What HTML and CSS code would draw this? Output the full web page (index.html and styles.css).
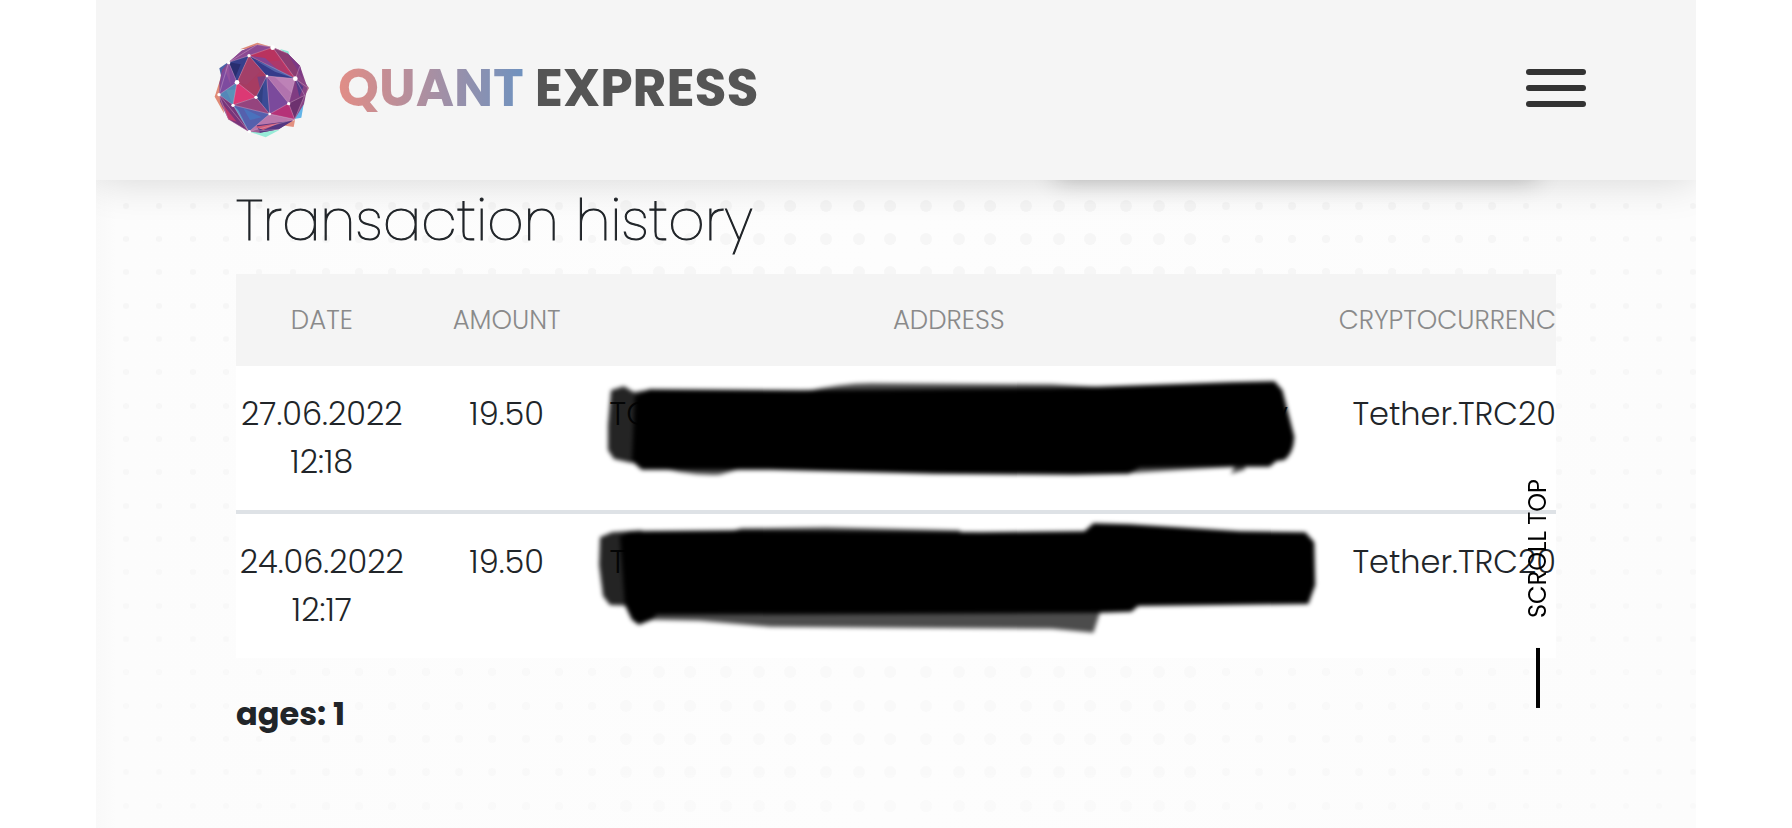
FILE: index.html
```
<!DOCTYPE html>
<html lang="en">
<head>
    <meta charset="UTF-8">
    <meta name="viewport" content="width=device-width, initial-scale=1.0">
    <title>Quant Express - Transaction history</title>
    <link rel="stylesheet" href="styles.css">
</head>
<body>
    <div class="page">
        <header class="header">
            <a class="logo" href="#">
                <svg class="logo-ball" viewBox="0 -6 390 360" aria-hidden="true">
                    <!-- outer coloured tips -->
                    <path d="M120 58L172 38L218 52Z" fill="#dc8878"/>
                    <path d="M240 57L265 64L272 84Z" fill="#8ee8d8"/>
                    <path d="M60 150L44 200L72 250Z" fill="#e08a76"/>
                    <path d="M306 145L327 174L312 202Z" fill="#b07090"/>
                    <path d="M314 205L304 263L278 268Z" fill="#62b4e8"/>
                    <path d="M240 285L281 291L285 270Z" fill="#e39080"/>
                    <path d="M148 305L197 322L238 300Z" fill="#97ecd8"/>
                    <path d="M58 115L84 97L66 150Z" fill="#4a62a8"/>
                    <!-- body -->
                    <path d="M86 97L125 62L172 44L218 52L262 70L300 108L322 172L312 222L284 268L236 298L180 308L147 305L85 268L60 215L58 160L66 120Z" fill="#8a4586"/>
                    <path d="M86 97L125 62L172 44L218 52L147 77Z" fill="#8c4a93"/>
                    <path d="M147 77L218 52L240 92L180 95Z" fill="#c4314f"/>
                    <path d="M147 77L218 52L286 146Z" fill="#b63563" fill-opacity=".8"/>
                    <path d="M147 77L195 84L232 118Z" fill="#854493"/>
                    <path d="M218 52L262 70L300 108L286 146Z" fill="#8b3d72"/>
                    <path d="M218 52L286 146L262 122Z" fill="#c43562"/>
                    <path d="M262 70L300 108L310 150Z" fill="#7c3a86"/>
                    <path d="M147 77L286 146L200 138Z" fill="#343b8b"/>
                    <path d="M165 90L225 125L286 146L220 112Z" fill="#5361aa"/>
                    <path d="M86 97L147 77L111 157Z" fill="#363f8c"/>
                    <path d="M86 97L122 103L105 145Z" fill="#292e70"/>
                    <path d="M147 77L200 138L168 202L111 157Z" fill="#a73c62"/>
                    <path d="M147 77L180 125L140 165L111 157Z" fill="#a33f68"/>
                    <path d="M172 140L200 138L180 178Z" fill="#7b3f80"/>
                    <path d="M86 97L111 157L57 194L66 130Z" fill="#7e4b9f"/>
                    <path d="M75 120L86 97L92 165Z" fill="#92529d"/>
                    <path d="M111 157L99 225L57 194Z" fill="#5587b8"/>
                    <path d="M78 180L108 178L99 225Z" fill="#5a93b8"/>
                    <path d="M111 157L168 202L99 225Z" fill="#dc3974"/>
                    <path d="M200 138L209 252L168 202Z" fill="#3b4b96"/>
                    <path d="M168 202L190 160L186 222Z" fill="#314082"/>
                    <path d="M200 138L266 220L209 252Z" fill="#7b4a9c"/>
                    <path d="M200 138L286 146L266 220Z" fill="#b173ae"/>
                    <path d="M225 142L286 146L275 190Z" fill="#bd82b7"/>
                    <path d="M286 146L314 196L266 220Z" fill="#803c82"/>
                    <path d="M286 146L310 170L298 200Z" fill="#523b88"/>
                    <path d="M266 220L314 196L284 268Z" fill="#6d316f"/>
                    <path d="M209 252L266 220L284 268Z" fill="#b53278"/>
                    <path d="M99 225L168 202L209 252Z" fill="#95447e"/>
                    <path d="M99 225L209 252L147 305Z" fill="#5560ad"/>
                    <path d="M130 235L185 262L150 270Z" fill="#4a72bd"/>
                    <path d="M57 194L99 225L147 305L85 268Z" fill="#77357a"/>
                    <path d="M70 225L110 275L85 268Z" fill="#bb3a6e"/>
                    <path d="M99 225L116 242L147 305Z" fill="#5e9cc9"/>
                    <path d="M209 252L284 268L147 305Z" fill="#ba78ac"/>
                    <path d="M170 286L278 272L236 298L180 308Z" fill="#543681"/>
                    <path d="M165 290L240 278L190 300Z" fill="#cf5b78"/>
                    <g fill="none" stroke="#e6c4d6" stroke-opacity=".7" stroke-width="1.5">
                        <path d="M86 97L172 44L218 52L147 77Z"/>
                        <path d="M86 97L111 157L147 77L286 146L218 52L262 70"/>
                        <path d="M86 97L57 194L111 157L99 225L57 194L147 305L99 225L168 202L111 157"/>
                        <path d="M147 77L200 138L286 146L266 220L200 138L168 202L209 252L200 138"/>
                        <path d="M99 225L209 252L266 220L314 196L286 146L322 172"/>
                        <path d="M147 305L209 252L284 268L266 220M147 305L284 268L314 196"/>
                        <path d="M300 108L286 146M57 194L85 268L147 305L236 298"/>
                    </g>
                    <g fill="#fff">
                        <circle cx="218" cy="53" r="7"/>
                        <circle cx="286" cy="146" r="7"/>
                        <circle cx="111" cy="157" r="7"/>
                        <circle cx="147" cy="77" r="5"/>
                        <circle cx="86" cy="98" r="5"/>
                        <circle cx="57" cy="194" r="5"/>
                        <circle cx="99" cy="226" r="5"/>
                        <circle cx="168" cy="202" r="5"/>
                        <circle cx="266" cy="221" r="5"/>
                        <circle cx="209" cy="252" r="4"/>
                        <circle cx="201" cy="138" r="4"/>
                        <circle cx="148" cy="305" r="5"/>
                    </g>
                </svg>
                <span class="logo-text"><span class="logo-quant">QUANT</span> EXPRESS</span>
            </a>
            <button class="burger" type="button" aria-label="Menu">
                <span></span>
                <span></span>
                <span></span>
            </button>
        </header>

        <main class="content">
            <!-- dotted background -->
            <svg class="dots" aria-hidden="true">
                <defs>
                    <pattern id="dots-s" width="100" height="100" patternUnits="userSpaceOnUse">
                        <g id="row-s"><circle cx="30" cy="26" r="3"/><circle cx="63" cy="26" r="3"/><circle cx="97" cy="26" r="3"/></g>
                        <use href="#row-s" y="33"/>
                        <use href="#row-s" y="66"/>
                    </pattern>
                    <pattern id="dots-m" width="100" height="100" patternUnits="userSpaceOnUse">
                        <g id="row-m"><circle cx="30" cy="26" r="4"/><circle cx="63" cy="26" r="4"/><circle cx="96" cy="26" r="4"/></g>
                        <use href="#row-m" y="33"/>
                        <use href="#row-m" y="66"/>
                    </pattern>
                    <pattern id="dots-l" width="100" height="100" patternUnits="userSpaceOnUse">
                        <g id="row-l"><circle cx="30" cy="26" r="6"/><circle cx="63" cy="26" r="6"/><circle cx="94" cy="26" r="6"/></g>
                        <use href="#row-l" y="33"/>
                        <use href="#row-l" y="66"/>
                    </pattern>
                </defs>
                <rect width="100%" height="100%" fill="url(#dots-s)"/>
                <rect x="200" width="75%" height="100%" fill="url(#dots-m)"/>
                <rect x="500" width="38%" height="100%" fill="url(#dots-l)"/>
            </svg>
            <div class="panel-shadow"></div>

            <section class="history">
                <h1>Transaction history</h1>
                <table class="history-table">
                    <thead>
                        <tr>
                            <th class="col-date">DATE</th>
                            <th class="col-amount">AMOUNT</th>
                            <th class="col-address">ADDRESS</th>
                            <th class="col-currency">CRYPTOCURRENC</th>
                        </tr>
                    </thead>
                    <tbody>
                        <tr>
                            <td>27.06.2022 12:18</td>
                            <td>19.50</td>
                            <td class="address">
                                <div class="address-text"><span>TC</span><span>y</span></div>
                                <svg class="marker" viewBox="604 366 690 144" aria-hidden="true">
                                    <path class="marker-light" d="M609 390L622 386L632 392L650 389V462L629 463L612 459L606 450V425Z"/>
                                    <path class="marker-mid" d="M800 392Q840 383 870 383L1052 384L1120 388V400H800ZM650 465Q680 476 718 475L750 466ZM1120 465V474L1236 467L1232 474L1246 470L1248 460Z"/>
                                    <path class="marker-dark" d="M633 396L648 389L800 390L1052 388L1113 386L1231 382L1276 381L1284 390L1296 437Q1295 454 1286 460L1278 461L1271 467L1200 467L1140 468L1130 474L1075 475L934 474L769 470L640 470L630 461Z"/>
                                </svg>
                            </td>
                            <td class="currency">Tether.TRC20</td>
                        </tr>
                        <tr>
                            <td>24.06.2022 12:17</td>
                            <td>19.50</td>
                            <td class="address">
                                <div class="address-text"><span>T</span></div>
                                <svg class="marker" viewBox="604 514 690 144" aria-hidden="true">
                                    <path class="marker-light" d="M598 537L610 532L640 530V606L608 605L601 596L597 565Z"/>
                                    <path class="marker-mid" d="M650 610V620L698 621L769 627L901 628L1052 629L1094 633L1102 608ZM720 534L740 528L825 527L960 530V536Z"/>
                                    <path class="marker-dark" d="M618 536L628 531L740 530L981 532L1085 531L1094 523L1130 524L1241 531L1307 532L1316 542L1317 585L1310 604L1139 606L1132 612L1101 613L655 615L650 620L637 625L630 620L623 605Z"/>
                                </svg>
                            </td>
                            <td class="currency">Tether.TRC20</td>
                        </tr>
                    </tbody>
                </table>
                <p class="pages">ages: 1</p>
            </section>
        </main>

        <a class="scroll-top" href="#">SCROLL TOP</a>
    </div>
</body>
</html>
```
FILE: styles.css
```
* {
    margin: 0;
    padding: 0;
    box-sizing: border-box;
}

body {
    font-family: Poppins, Inter, sans-serif;
    font-size: 32px;
    font-weight: 300;
    line-height: 48px;
    color: #212529;
    background: #fff;
    padding: 0 96px;
}

.page {
    position: relative;
    min-height: 100vh;
    display: flex;
    flex-direction: column;
    overflow: hidden;
}

.header {
    position: relative;
    z-index: 2;
    display: flex;
    justify-content: space-between;
    align-items: center;
    padding: 28px 110px 32px 104px;
    background: #f5f5f5;
    box-shadow: 0 0 40px rgba(0, 0, 0, 0.16);
}

.logo {
    display: flex;
    align-items: center;
    gap: 8px;
    color: #555;
    text-decoration: none;
}

.logo-ball {
    width: 130px;
    height: 120px;
}

.logo-text {
    font-size: 52px;
    font-weight: 700;
}

.logo-quant {
    background: linear-gradient(90deg, #e28d86, #6f92bf);
    -webkit-background-clip: text;
    background-clip: text;
    color: transparent;
}

.burger {
    display: flex;
    flex-direction: column;
    gap: 10px;
    width: 60px;
    border: none;
    background: none;
    cursor: pointer;
}

.burger span {
    height: 6px;
    border-radius: 3px;
    background: #333;
}

.content {
    position: relative;
    flex: 1;
    padding: 4px 140px 0;
    background: linear-gradient(90deg, #f9f9f9, #fcfcfc 20px, #fdfdfd 50%, #fcfcfc);
}

.dots {
    position: absolute;
    top: 0;
    left: 0;
    width: 100%;
    height: 100%;
    fill: #f5f5f5;
    -webkit-mask-image: linear-gradient(#000, rgba(0, 0, 0, 0.4));
    mask-image: linear-gradient(#000, rgba(0, 0, 0, 0.4));
}

/* panel hidden under the header, only its shadow is visible */
.panel-shadow {
    position: absolute;
    top: -40px;
    right: 160px;
    width: 480px;
    height: 36px;
    box-shadow: 0 4px 24px rgba(0, 0, 0, 0.24);
}

.history {
    position: relative;
}

h1 {
    font-size: 57px;
    font-weight: 200;
    line-height: 72px;
    margin-bottom: 18px;
    -webkit-text-stroke: 1px #212529;
}

.history-table {
    width: 100%;
    table-layout: fixed;
    border-collapse: collapse;
    background: #fff;
    text-align: center;
}

.history-table th {
    height: 92px;
    background: #f4f4f4;
    color: #8a8a8a;
    font-size: 26px;
    font-weight: 300;
}

.history-table td {
    padding: 24px 0;
    vertical-align: top;
}

.history-table tbody tr + tr {
    border-top: 4px solid #dee2e6;
}

.col-date {
    width: 13%;
}

.col-amount {
    width: 15%;
}

.col-address {
    width: 52%;
}

.history-table .col-currency,
.history-table .currency {
    text-align: right;
}

.address {
    position: relative;
}

.address-text {
    display: flex;
    justify-content: space-between;
    padding: 0 4px;
}

.marker {
    position: absolute;
    top: 0;
    left: 0;
    width: 100%;
    height: 100%;
    overflow: visible;
    filter: blur(2px);
}

.marker-light {
    fill: rgba(0, 0, 0, 0.86);
}

.marker-mid {
    fill: rgba(0, 0, 0, 0.7);
}

.marker-dark {
    fill: #000;
}

.pages {
    margin-top: 32px;
    font-weight: 700;
}

.scroll-top {
    position: absolute;
    z-index: 1;
    right: 146px;
    bottom: 120px;
    display: flex;
    align-items: center;
    gap: 30px;
    writing-mode: vertical-rl;
    transform: rotate(180deg);
    color: #000;
    font-size: 24px;
    font-weight: 400;
    line-height: 24px;
    text-decoration: none;
}

.scroll-top::before {
    content: "";
    width: 4px;
    height: 60px;
    background: #000;
}
```
